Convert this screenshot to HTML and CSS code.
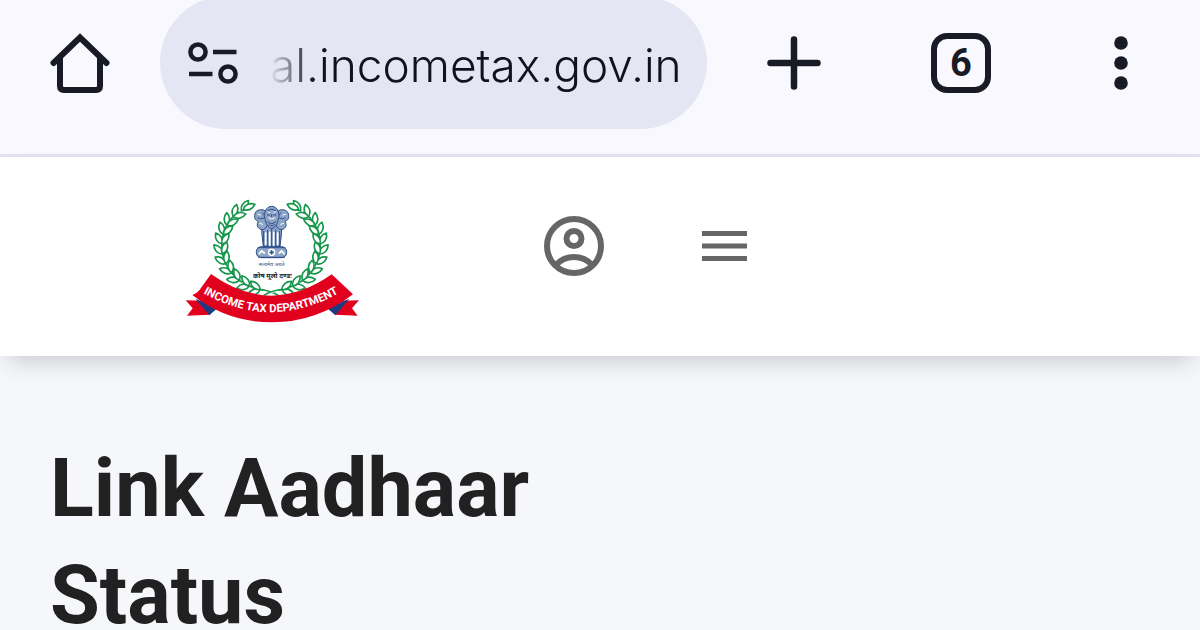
FILE: index.html
```html
<!DOCTYPE html>
<html lang="en">
<head>
    <meta charset="UTF-8">
    <meta name="viewport" content="width=device-width, initial-scale=1.0">
    <title>Link Aadhaar Status</title>
    <link rel="stylesheet" href="styles.css">
</head>
<body>
    <div class="toolbar">
        <button class="tool" type="button" aria-label="Home">
            <svg width="60" height="60" viewBox="0 0 60 60" fill="none" stroke="currentColor" stroke-width="6">
                <path d="M3.5 30 L30 4.5 L56.5 30" stroke-linecap="round" stroke-linejoin="miter"/>
                <path d="M10 25 V53 Q10 57 14 57 H46 Q50 57 50 53 V25"/>
            </svg>
        </button>

        <div class="address">
            <button class="site-info" type="button" aria-label="Site settings">
                <svg width="50" height="42" viewBox="0 0 50 42" fill="none" stroke="currentColor" stroke-width="4.5">
                    <circle cx="10" cy="10" r="7.6"/>
                    <circle cx="40" cy="32" r="7.6"/>
                    <path d="M25 10 H48.5 M1 32 H24.5"/>
                </svg>
            </button>
            <input class="url" type="text" aria-label="Address" value="al.incometax.gov.in">
        </div>

        <div class="tools">
            <button class="tool new-tab" type="button" aria-label="New tab">
                <svg width="54" height="54" viewBox="0 0 54 54" fill="none" stroke="currentColor" stroke-width="6.5" stroke-linecap="round">
                    <path d="M27 3.5 V50.5 M3.5 27 H50.5"/>
                </svg>
            </button>
            <button class="tool tabs" type="button" aria-label="Open tabs">6</button>
            <button class="tool" type="button" aria-label="More">
                <svg width="14" height="54" viewBox="0 0 14 54" fill="currentColor">
                    <circle cx="7" cy="7" r="6.8"/>
                    <circle cx="7" cy="27" r="6.8"/>
                    <circle cx="7" cy="47" r="6.8"/>
                </svg>
            </button>
        </div>
    </div>

    <header class="header">
        <a class="logo" href="#" aria-label="Income Tax Department">
            <svg width="185" height="135" viewBox="0 0 555 405">
                <defs>
                    <path id="leaf" d="M0 0 C-11 -10 -11 -26 0 -38 C11 -26 11 -10 0 0 Z"/>
                    <g id="sprig">
                        <path d="M0 10 V-22"/>
                        <use href="#leaf" transform="rotate(-33)"/>
                        <use href="#leaf" transform="rotate(30)"/>
                    </g>
                    <g id="branch">
                        <path d="M296 302 Q272 286 234 282"/>
                        <use href="#sprig" transform="translate(240 284) rotate(-79)"/>
                        <use href="#sprig" transform="translate(208 273) rotate(-66)"/>
                        <use href="#sprig" transform="translate(178 256) rotate(-53)"/>
                        <use href="#sprig" transform="translate(155 233) rotate(-39)"/>
                        <use href="#sprig" transform="translate(138 206) rotate(-26)"/>
                        <use href="#sprig" transform="translate(128 177) rotate(-11)"/>
                        <use href="#sprig" transform="translate(126 147) rotate(3)"/>
                        <use href="#sprig" transform="translate(130 118) rotate(18)"/>
                        <use href="#sprig" transform="translate(141 91) rotate(32)"/>
                        <use href="#sprig" transform="translate(160 65) rotate(48)"/>
                        <use href="#leaf" transform="translate(184 48) rotate(34)"/>
                        <use href="#leaf" transform="translate(190 43) rotate(66)"/>
                    </g>
                    <g id="tail">
                        <path fill="#e2001f" d="M17 316 L66 317 L90 359 L21 362 L38 340 Z"/>
                        <path fill="#1d3c80" d="M46 311 L112 340 L88 361 Z"/>
                    </g>
                    <path id="ribbon-text" d="M60 289 Q273 414 486 289"/>
                </defs>

                <!-- laurel -->
                <g fill="#fff" stroke="#16964a" stroke-width="5" stroke-linejoin="round">
                    <use href="#branch"/>
                    <use href="#branch" transform="translate(546 0) scale(-1 1)"/>
                </g>

                <!-- lion capital -->
                <g fill="#8fa5c8" stroke="#2c4d8a" stroke-width="3" stroke-linejoin="round">
                    <path d="M246 82 Q243 112 250 154 H300 Q307 112 304 82 Z"/>
                    <path d="M224 62 Q224 46 242 44 Q258 43 260 58 L262 92 Q252 110 238 101 Q227 93 235 79 Q222 74 224 62 Z"/>
                    <path d="M326 62 Q326 46 308 44 Q292 43 290 58 L288 92 Q298 110 312 101 Q323 93 315 79 Q328 74 326 62 Z"/>
                    <path d="M256 48 Q262 34 275 34 Q288 34 294 48 Q301 61 294 76 Q290 96 275 101 Q260 96 256 76 Q249 61 256 48 Z"/>
                    <rect x="229" y="155" width="91" height="33" rx="15"/>
                </g>
                <g fill="none" stroke="#fff" stroke-width="5" stroke-linecap="round">
                    <path d="M257 114 V148 M269 112 V151 M281 112 V151 M293 114 V148"/>
                    <path d="M264 50 l5 3 M286 50 l-5 3 M266 69 q9 7 18 0 M234 58 l7 2 M316 58 l-7 2 M239 85 l9 3 M311 85 l-9 3" stroke-width="3"/>
                    <path d="M238 176 l7 -8 l8 6 M298 174 l7 -6 l7 8"/>
                    <circle cx="275" cy="172" r="9"/>
                </g>
                <g fill="none" stroke="#2c4d8a" stroke-width="3">
                    <path d="M263 104 V154 M275 101 V156 M287 104 V154 M251 108 V154 M299 108 V154"/>
                    <path d="M262 47 Q275 38 288 47 M261 60 h9 M280 60 h9 M275 57 v9 M262 79 q13 14 26 0 M266 88 q9 9 18 0 M233 68 q8 7 19 1 M317 68 q-8 7 -19 1 M246 53 l8 7 M304 53 l-8 7"/>
                    <path d="M275 165 v14 M268 172 h14 M233 158 H316 M235 187 H314"/>
                </g>

                <text class="motto" x="275" y="212" text-anchor="middle">सत्यमेव जयते</text>
                <text class="sanskrit" x="277" y="248" text-anchor="middle">कोष मूलो दण्डः</text>

                <!-- ribbon -->
                <use href="#tail"/>
                <use href="#tail" transform="translate(554 0) scale(-1 1)"/>
                <path fill="#e2001f" d="M93 237 Q180 300 275 302 Q368 300 455 238 L519 298 Q410 382 276 382 Q142 382 37 300 Q48 298 58 286 Z"/>
                <text class="ribbon"><textPath href="#ribbon-text" startOffset="50%" text-anchor="middle">INCOME TAX DEPARTMENT</textPath></text>
            </svg>
        </a>
        <nav class="header-actions">
            <button class="icon-button" type="button" aria-label="Account">
                <svg width="60" height="60" viewBox="0 0 60 60" fill="none" stroke="currentColor" stroke-width="6">
                    <circle cx="30" cy="30" r="27"/>
                    <circle cx="30" cy="22.5" r="7.5"/>
                    <path d="M12 49 Q19 41 30 41 Q41 41 48 49"/>
                </svg>
            </button>
            <button class="icon-button" type="button" aria-label="Menu">
                <svg width="45" height="30" viewBox="0 0 45 30" fill="currentColor">
                    <path d="M0 0 H45 V5 H0 Z M0 12.5 H45 V17.5 H0 Z M0 25 H45 V30 H0 Z"/>
                </svg>
            </button>
        </nav>
    </header>

    <main class="content">
        <h1>Link Aadhaar Status</h1>
    </main>
</body>
</html>
```
FILE: styles.css
```css
:root {
    --ink: #181a26;
    --toolbar: #f9f8ff;
    --pill: #e4e6f3;
    --background: #f6f7fb;
    --icon-gray: #666666;
}

* {
    box-sizing: border-box;
    margin: 0;
    padding: 0;
}

body {
    background-color: var(--background);
    color: #202120;
    font-family: Roboto, sans-serif;
}

button {
    display: flex;
    align-items: center;
    justify-content: center;
    background: none;
    border: none;
    color: inherit;
    cursor: pointer;
}

svg {
    display: block;
}

.toolbar {
    display: flex;
    align-items: center;
    gap: 50px;
    padding: 0 49px 29px 50px;
    background: var(--toolbar);
    border-bottom: 3px solid #e2e2ee;
    color: var(--ink);
}

.tool {
    width: 60px;
    height: 60px;
}

.address {
    flex: 1;
    min-width: 0;
    display: flex;
    align-items: center;
    gap: 32px;
    height: 133px;
    margin: -4px 0;
    padding: 0 24px 0 28px;
    border-radius: 67px;
    background: var(--pill);
}

.url {
    flex: 1;
    min-width: 0;
    padding-top: 4px;
    border: none;
    outline: none;
    background: none;
    color: #10121e;
    font-family: Inter, sans-serif;
    font-size: 46px;
    font-weight: 300;
    line-height: 64px;
    -webkit-mask-image: linear-gradient(to right, transparent, #000 44px);
    mask-image: linear-gradient(to right, transparent, #000 44px);
}

.tools {
    display: flex;
    gap: 100px;
}

.new-tab {
    width: 74px;
}

.tabs {
    border: 6px solid var(--ink);
    border-radius: 16px;
    font-family: Roboto, sans-serif;
    font-size: 38px;
    font-weight: 700;
}

.header {
    position: relative;
    display: flex;
    align-items: flex-start;
    gap: 179px;
    padding: 38px 0 26px 180px;
    background: white;
    box-shadow: 0 12px 24px -8px rgba(0,0,0,0.2);
}

.header-actions {
    display: flex;
    align-items: center;
    gap: 98px;
    padding-top: 21px;
    color: var(--icon-gray);
}

.motto {
    font-family: "Noto Sans", sans-serif;
    font-size: 16px;
    fill: #2c4d8a;
}

.sanskrit {
    font-family: "Noto Sans", sans-serif;
    font-size: 20px;
    font-weight: 700;
    fill: #222;
}

.ribbon {
    font-family: Roboto, sans-serif;
    font-size: 34px;
    font-weight: 700;
    fill: white;
}

.content {
    padding: 79px 50px 0;
}

.content h1 {
    max-width: 560px;
    font-size: 81px;
    font-weight: 700;
    line-height: 107px;
}
```
